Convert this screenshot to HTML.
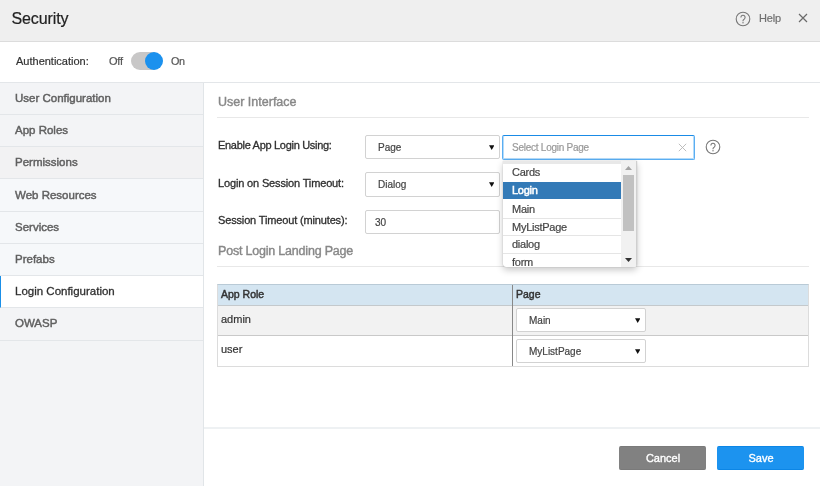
<!DOCTYPE html>
<html><head><meta charset="utf-8">
<style>
*{box-sizing:border-box;margin:0;padding:0}
html,body{width:820px;height:486px;overflow:hidden;background:#fff;will-change:transform;font-family:"Liberation Sans",sans-serif;color:#333}
.a{position:absolute;white-space:nowrap;line-height:normal;-webkit-text-stroke:0.2px currentColor}
.md{-webkit-text-stroke:0.25px currentColor}
#hdr{position:absolute;left:0;top:0;width:820px;height:42px;background:#efefef;border-bottom:1px solid #dcdcdc}
#auth{position:absolute;left:0;top:42px;width:820px;height:41px;background:#fff;border-bottom:1px solid #e3e6e9}
#side{position:absolute;left:0;top:83px;width:204px;height:403px;background:#f3f4f6;border-right:1px solid #e1e5e8}
.si{position:absolute;left:0;width:203px;height:32px;border-bottom:1px solid #e3e6e9}
.si span{position:absolute;left:15px;top:9px;font-size:11.5px;color:#606060;white-space:nowrap;line-height:normal;-webkit-text-stroke:0.45px currentColor}
.si.sel{background:#fff;border-left:1px solid #1a8fe8}
.si.sel span{color:#303030;left:14px;-webkit-text-stroke:0.3px currentColor}
.lbl{position:absolute;font-size:11px;color:#2e2e2e;-webkit-text-stroke:0.3px currentColor;white-space:nowrap;letter-spacing:-0.15px;line-height:normal}
.sec{position:absolute;font-size:12.5px;color:#888;white-space:nowrap;line-height:normal;-webkit-text-stroke:0.4px currentColor}
.hr{position:absolute;height:1px;background:#e8e8e8}
.sel1{position:absolute;height:24px;border:1px solid #d2d2d2;border-radius:2px;background:#fff;font-size:10px;color:#444;white-space:nowrap}
.sel1 .t{position:absolute;left:12px;top:6px;line-height:normal;-webkit-text-stroke:0.2px currentColor}
.sel1 .ar{position:absolute;right:5px;top:8.7px}
.dd{position:absolute;font-size:11px;color:#444;-webkit-text-stroke:0.2px currentColor;white-space:nowrap;line-height:normal;letter-spacing:-0.25px}
.btn{position:absolute;height:24px;border-radius:2px}
.btn span{position:absolute;left:1px;right:0;top:5px;text-align:center;font-size:11px;color:#fff;line-height:normal;-webkit-text-stroke:0.35px currentColor}
</style></head><body>
<div id="hdr">
  <div class="a" style="left:11.5px;top:9.6px;font-size:16px;color:#222;letter-spacing:-0.1px">Security</div>
  <svg class="a" style="left:735px;top:11px" width="16" height="16" viewBox="0 0 16 16"><circle cx="8" cy="8" r="6.8" fill="none" stroke="#777" stroke-width="1.1"/><path d="M5.9 6.4a2.1 2.1 0 1 1 3.2 1.8c-.7.4-1.1.8-1.1 1.6v.4" fill="none" stroke="#777" stroke-width="1.1"/><circle cx="8" cy="11.7" r=".7" fill="#777"/></svg>
  <div class="a" style="left:759px;top:12px;font-size:11px;color:#707070;letter-spacing:-0.2px">Help</div>
  <svg class="a" style="left:798px;top:13px" width="10" height="10" viewBox="0 0 10 10"><path d="M1 1L9 9M9 1L1 9" stroke="#6a6a6a" stroke-width="1.2"/></svg>
</div>
<div id="auth">
  <div class="a" style="left:16px;top:13px;font-size:11px;color:#333">Authentication:</div>
  <div class="a" style="left:109px;top:12.6px;font-size:11px;letter-spacing:-0.2px;color:#555">Off</div>
  <div class="a" style="left:131px;top:9.8px;width:30px;height:18.6px;border-radius:9.3px;background:#c8c7c7"></div>
  <div class="a" style="left:144.6px;top:9.8px;width:18.6px;height:18.6px;border-radius:50%;background:#1b91ee"></div>
  <div class="a" style="left:171px;top:12.6px;font-size:10.8px;letter-spacing:-0.5px;color:#555">On</div>
</div>
<div id="side">
  <div class="si" style="top:0"><span>User Configuration</span></div>
  <div class="si" style="top:32px"><span>App Roles</span></div>
  <div class="si" style="top:64px;background:#f2f2f3"><span>Permissions</span></div>
  <div class="si" style="top:96px;height:33px;background:#f6f8fa"><span style="top:9.5px">Web Resources</span></div>
  <div class="si" style="top:129px;background:#f6f8fa"><span>Services</span></div>
  <div class="si" style="top:161px;background:#f6f8fa"><span>Prefabs</span></div>
  <div class="si sel" style="top:193px"><span>Login Configuration</span></div>
  <div class="si" style="top:225px;height:33px"><span style="top:9.3px">OWASP</span></div>
</div>

<div class="sec" style="left:218px;top:95px">User Interface</div>
<div class="hr" style="left:217px;top:117px;width:592px"></div>

<div class="lbl" style="left:218px;top:139px;letter-spacing:-0.3px">Enable App Login Using:</div>
<div class="lbl" style="left:218px;top:177px">Login on Session Timeout:</div>
<div class="lbl" style="left:218px;top:214px">Session Timeout (minutes):</div>

<div class="sel1" style="left:365px;top:135px;width:135px"><span class="t">Page</span><svg class="ar" width="5.4" height="5" viewBox="0 0 5.4 5"><path d="M0 0.3H5.4L2.7 4.9Z" fill="#111"/></svg></div>
<div class="sel1" style="left:365px;top:172px;width:135px;height:24.6px"><span class="t">Dialog</span><svg class="ar" width="5.4" height="5" viewBox="0 0 5.4 5"><path d="M0 0.3H5.4L2.7 4.9Z" fill="#111"/></svg></div>
<div class="sel1" style="left:365px;top:210px;width:135px"><span class="t" style="left:9px">30</span></div>

<div class="a" style="left:502px;top:135px;width:192.6px;height:25px;border:1px solid #5aaef2;border-top-color:#1a8be6;border-radius:2px;background:#fff;box-shadow:inset 1px 0 0 #b5dbf9,inset -1px 0 0 #b5dbf9,inset 0 -1px 0 #b5dbf9"></div>
<div class="a" style="left:512px;top:142px;font-size:10px;letter-spacing:-0.25px;color:#999">Select Login Page</div>
<svg class="a" style="left:678px;top:143px" width="9" height="9" viewBox="0 0 9 9"><path d="M.8 .8L8.2 8.2M8.2 .8L.8 8.2" stroke="#b5b5b5" stroke-width="0.9"/></svg>
<svg class="a" style="left:705px;top:139px" width="16" height="16" viewBox="0 0 16 16"><circle cx="8" cy="8" r="6.8" fill="none" stroke="#777" stroke-width="1.1"/><path d="M5.9 6.4a2.1 2.1 0 1 1 3.2 1.8c-.7.4-1.1.8-1.1 1.6v.4" fill="none" stroke="#777" stroke-width="1.1"/><circle cx="8" cy="11.7" r=".7" fill="#777"/></svg>

<div class="sec" style="left:218px;top:244px;letter-spacing:-0.2px">Post Login Landing Page</div>
<div class="hr" style="left:217px;top:266px;width:592px"></div>

<!-- table -->
<div class="a" style="left:217px;top:284px;width:592px;height:83px;border:1px solid #dcdcdc;border-top-color:#b9cad6"></div>
<div class="a" style="left:218px;top:285px;width:590px;height:21px;background:#d4e5f1;border-bottom:1px solid #c4c9cc"></div>
<div class="a" style="left:218px;top:306px;width:590px;height:30px;background:#f2f2f2;border-bottom:1px solid #c9c9c9"></div>
<div class="a" style="left:512px;top:285px;width:1px;height:81px;background:#888"></div>
<div class="a" style="left:221px;top:288px;font-size:10.5px;color:#333;-webkit-text-stroke:0.45px #333">App Role</div>
<div class="a" style="left:516px;top:288px;font-size:10.5px;color:#333;-webkit-text-stroke:0.45px #333">Page</div>
<div class="a" style="left:221px;top:313px;font-size:11px;color:#333">admin</div>
<div class="a" style="left:221px;top:343px;font-size:11px;color:#333">user</div>
<div class="sel1" style="left:516px;top:308px;width:130px"><span class="t">Main</span><svg class="ar" width="5.4" height="5" viewBox="0 0 5.4 5"><path d="M0 0.3H5.4L2.7 4.9Z" fill="#111"/></svg></div>
<div class="sel1" style="left:516px;top:339px;width:130px"><span class="t">MyListPage</span><svg class="ar" width="5.4" height="5" viewBox="0 0 5.4 5"><path d="M0 0.3H5.4L2.7 4.9Z" fill="#111"/></svg></div>

<!-- dropdown -->
<div class="a" style="left:503px;top:161px;width:134px;height:106px;background:#fff;box-shadow:0 3px 7px rgba(0,0,0,.22),0 0 1px rgba(0,0,0,.35);border-radius:0 0 3px 3px;overflow:hidden">
  <div class="a" style="left:0;top:0;width:134px;height:3px;background:#e8e8e8"></div>
  <div class="a" style="left:0;top:21px;width:118px;height:17px;background:#337ab7"></div>
  <div class="a" style="left:0;top:57px;width:118px;height:1px;background:#e5e5e5"></div>
  <div class="a" style="left:0;top:74px;width:118px;height:1px;background:#e5e5e5"></div>
  <div class="a" style="left:0;top:92px;width:118px;height:1px;background:#e5e5e5"></div>
  <div class="dd" style="left:9px;top:5px">Cards</div>
  <div class="dd" style="left:9px;top:23px;color:#fff;-webkit-text-stroke:0.5px #fff">Login</div>
  <div class="dd" style="left:9px;top:42px">Main</div>
  <div class="dd" style="left:9px;top:60px">MyListPage</div>
  <div class="dd" style="left:9px;top:77px">dialog</div>
  <div class="dd" style="left:9px;top:95px">form</div>
  <div class="a" style="left:118px;top:0;width:15px;height:106px;background:#f1f1f1"></div>
  <div class="a" style="left:133px;top:0;width:1px;height:106px;background:#cfcfcf"></div>
  <div class="a" style="left:120px;top:14px;width:11px;height:56px;background:#c1c1c1"></div>
  <svg class="a" style="left:122px;top:5px" width="7" height="4" viewBox="0 0 7 4"><path d="M0 4L3.5 0L7 4Z" fill="#a3a3a3"/></svg>
  <svg class="a" style="left:122px;top:97px" width="7" height="4" viewBox="0 0 7 4"><path d="M0 0L3.5 4L7 0Z" fill="#333"/></svg>
</div>

<!-- footer -->
<div class="a" style="left:204px;top:427px;width:616px;height:2px;background:#eef1f3"></div>
<div class="btn" style="left:619px;top:446px;width:87px;background:#818181;border-top:1px solid #7a7a7a;border-bottom:1px solid #7a7a7a"><span>Cancel</span></div>
<div class="btn" style="left:717px;top:446px;width:87px;background:#1c93ef;border-top:1px solid #0c86e6;border-bottom:1px solid #0c86e6"><span>Save</span></div>
</body></html>
